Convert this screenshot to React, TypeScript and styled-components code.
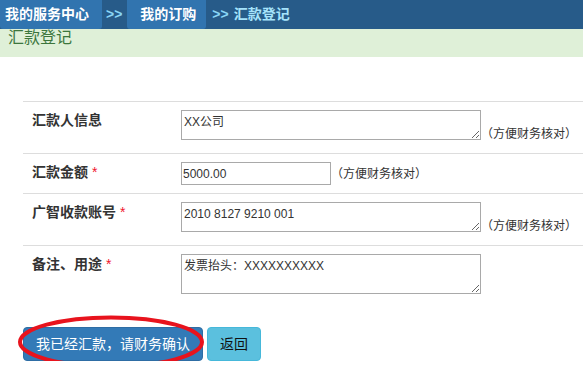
import React from 'react';
import styled, { createGlobalStyle } from 'styled-components';

const GlobalStyle = createGlobalStyle`
    body {
        margin: 0;
        background: #fff;
        font-family: "Liberation Sans", "Noto Sans CJK SC", sans-serif;
        color: #333;
    }
`;

const rows = [
    { label: '汇款人信息', value: 'XX公司', kind: 'area', h: 51, note: true, required: false },
    { label: '汇款金额', value: '5000.00', kind: 'input', h: 39, note: true, required: true },
    { label: '广智收款账号', value: '2010 8127 9210 001', kind: 'area', h: 51, note: true, required: true },
    { label: '备注、用途', value: '发票抬头：XXXXXXXXXX', kind: 'tall', h: 56, note: false, required: true },
];

function App(){
    return(
        <>
            <GlobalStyle />
            <Header>
                <Crumb $padL={5} $padR={13}>我的服务中心</Crumb>
                <Sep>&gt;&gt;</Sep>
                <Crumb $padL={13} $padR={10}>我的订购</Crumb>
                <Current><Sep as="span">&gt;&gt;</Sep>汇款登记</Current>
            </Header>
            <Band>汇款登记</Band>
            <Form>
                <Table>
                    {rows.map((r) => (
                        <Row key={r.label} $h={r.h}>
                            <Label>
                                {r.label}
                                {r.required && <Star>*</Star>}
                            </Label>
                            <Field $center={r.kind === 'input'}>
                                {r.kind === 'input'
                                    ? <TextInput defaultValue={r.value} />
                                    : <TextArea defaultValue={r.value} $h={r.kind === 'tall' ? 40 : 30} />}
                                {r.note && <Note>（方便财务核对）</Note>}
                            </Field>
                        </Row>
                    ))}
                </Table>
                <ButtonBar>
                    <Button $variant="primary">我已经汇款，请财务确认</Button>
                    <Button $variant="info">返回</Button>
                    <Circle width="190" height="56" viewBox="0 0 190 56">
                        <ellipse cx="94" cy="27" rx="91" ry="24.5" fill="none" stroke="#e8131d" strokeWidth="4" />
                    </Circle>
                </ButtonBar>
            </Form>
        </>
    );
}

const Header = styled.div`
    display: flex;
    height: 29px;
    background: #275b89;
    font-size: 14px;
    font-weight: bold;
    line-height: 29px;
`;

const Crumb = styled.div<{ $padL: number; $padR: number }>`
    background: #3174af;
    color: #fff;
    padding: 0 ${p => p.$padR}px 0 ${p => p.$padL}px;
    border-radius: 0 0 3px 3px;
`;

const Sep = styled.div`
    color: #8ad6f7;
    padding: 0 5px 0 4px;
`;

const Current = styled.div`
    color: #a6e3fb;
    display: flex;

    span {
        padding: 0 5px 0 6px;
    }
`;

const Band = styled.div`
    height: 28px;
    background: #dff0d8;
    color: #3c763d;
    font-size: 16px;
    line-height: 16px;
    padding-left: 8px;
    padding-top: 1px;
    box-sizing: border-box;
`;

const Form = styled.div`
    padding: 44px 0 0 23px;
`;

const Table = styled.div`
    display: flex;
    flex-direction: column;
`;

const Row = styled.div<{ $h: number }>`
    display: grid;
    grid-template-columns: 150px 1fr;
    height: ${p => p.$h}px;
    border-top: 1px solid #dddddd;
`;

const Label = styled.div`
    padding: 8px 0 0 9px;
    font-size: 14px;
    font-weight: bold;
    line-height: 20px;
    color: #333;
`;

const Star = styled.span`
    color: #f0142c;
    font-weight: normal;
    margin-left: 4px;
`;

const Field = styled.div<{ $center: boolean }>`
    display: flex;
    align-items: ${p => p.$center ? 'center' : 'flex-end'};
    align-self: start;
    padding: 8px 8px 0;
`;

const TextArea = styled.textarea<{ $h: number }>`
    width: 300px;
    height: ${p => p.$h}px;
    box-sizing: border-box;
    border: 1px solid #a9a9a9;
    padding: 4px 2px 1px;
    margin: 0;
    font-family: "Liberation Sans", "Noto Sans CJK SC", sans-serif;
    font-size: 12px;
    line-height: 15px;
    color: #333;
`;

const TextInput = styled.input`
    width: 150px;
    height: 23px;
    box-sizing: border-box;
    border: 1px solid #a9a9a9;
    padding: 1px 1px;
    margin: 0;
    font-family: "Liberation Sans", "Noto Sans CJK SC", sans-serif;
    font-size: 12px;
    color: #333;
`;

const Note = styled.span`
    font-size: 12px;
    line-height: 12px;
    color: #333;
    white-space: nowrap;
`;

const ButtonBar = styled.div`
    position: relative;
    display: flex;
    gap: 4px;
    margin-top: 25px;
`;

const Button = styled.button<{ $variant: 'primary' | 'info' }>`
    height: 34px;
    padding: 6px 12px;
    font-family: "Liberation Sans", "Noto Sans CJK SC", sans-serif;
    font-size: 14px;
    line-height: 20px;
    border-radius: 4px;
    border: 1px solid ${p => p.$variant === 'primary' ? '#2e6da4' : '#46b8da'};
    background: ${p => p.$variant === 'primary' ? '#337ab7' : '#5bc0de'};
    color: ${p => p.$variant === 'primary' ? '#fff' : '#111'};
    cursor: pointer;
`;

const Circle = styled.svg`
    position: absolute;
    left: -6px;
    top: -12px;
    pointer-events: none;
`;

export default App;
